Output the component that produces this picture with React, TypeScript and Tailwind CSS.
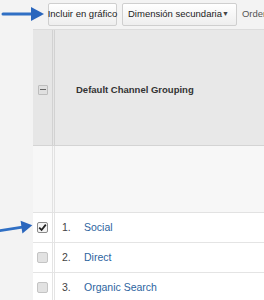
import React from 'react';

const Arrow: React.FC<{ className: string; d: string; head: string }> = ({ className, d, head }) => (
  <svg className={className} viewBox="0 0 44 20" fill="none">
    <path d={d} stroke="#2f6fc4" strokeWidth="3" strokeLinecap="round" />
    <path d={head} fill="#2a66bd" />
  </svg>
);

const Box: React.FC<{ checked?: boolean }> = ({ checked }) => (
  <span
    className={
      checked
        ? 'w-[11px] h-[11px] flex items-center justify-center border border-[#8a8a8a] bg-[#f4f4f4] rounded-[2px]'
        : 'w-[11px] h-[11px] border border-[#c4c4c4] bg-[#e2e2e2] rounded-[2px]'
    }
  >
    {checked && (
      <svg width="9" height="9" viewBox="0 0 9 9">
        <path d="M1.2 4.6 L3.6 7 L7.8 1.6" stroke="#222" strokeWidth="1.8" fill="none" />
      </svg>
    )}
  </span>
);

const App: React.FC = () => {
  const rows = [
    { n: '1.', label: 'Social', checked: true },
    { n: '2.', label: 'Direct' },
    { n: '3.', label: 'Organic Search' },
  ];
  return (
    <div className="relative w-[264px] h-[300px] overflow-hidden bg-[#f3f3f3] font-['Liberation_Sans',Arial,sans-serif]">
      <div className="h-[29px] flex items-center pl-[48px] gap-[5px] text-[9.5px] text-[#222] whitespace-nowrap">
        <button className="h-[23px] w-[69px] flex items-center justify-center border border-[#cfcfcf] rounded-[2px] bg-gradient-to-b from-white to-[#eeeeee]">
          Incluir en gráfico
        </button>
        <button className="h-[23px] w-[117px] pl-[5px] pr-[7px] flex items-center justify-between border border-[#cfcfcf] rounded-[2px] bg-gradient-to-b from-white to-[#eeeeee]">
          <span>Dimensión secundaria</span>
          <span className="text-[7px] text-[#444]">▼</span>
        </button>
        <span className="text-[#555]">Orden</span>
      </div>

      <div className="ml-[33px] border-t border-[#dcdcdc]">
        <div className="flex h-[116px] bg-[#e8e8e8] border-b border-[#d4d4d4]">
          <div className="w-[22px] flex items-center justify-center pt-[4px] border-r-[3px] border-double border-[#d2d2d2] bg-[#e6e6e6]">
            <span className="w-[10px] h-[10px] flex items-center justify-center border border-[#bdbdbd] bg-[#e0e0e0] rounded-[1px]">
              <span className="w-[6px] h-[1.5px] bg-[#666]" />
            </span>
          </div>
          <div className="flex-1 flex items-center pl-[21px] pt-[5px] text-[9.5px] font-bold text-[#333] whitespace-nowrap">
            Default Channel Grouping
          </div>
        </div>
        <div className="flex h-[67px] bg-[#f7f7f7] border-b border-[#e2e2e2]">
          <div className="w-[22px] border-r-[3px] border-double border-[#e2e2e2]" />
        </div>
        {rows.map((r) => (
          <div key={r.n} className="flex h-[30px] bg-white border-b border-[#e4e4e4]">
            <div className="w-[22px] flex items-center justify-center border-r-[3px] border-double border-[#e4e4e4]">
              <Box checked={r.checked} />
            </div>
            <div className="flex items-center text-[10.5px] whitespace-nowrap">
              <span className="w-[29px] pl-[7px] text-[#444]">{r.n}</span>
              <span className="text-[#2d64a0]">{r.label}</span>
            </div>
          </div>
        ))}
      </div>

      <Arrow className="absolute left-[1px] top-[4px] w-[44px] h-[20px]" d="M2 10 L32 10" head="M30 3 L43 10 L30 17 Z" />
      <Arrow className="absolute left-[-3px] top-[219px] w-[40px] h-[18px]" d="M2 13 L28 9" head="M26 2 L39 7 L28 16 Z" />
    </div>
  );
};

export default App;
